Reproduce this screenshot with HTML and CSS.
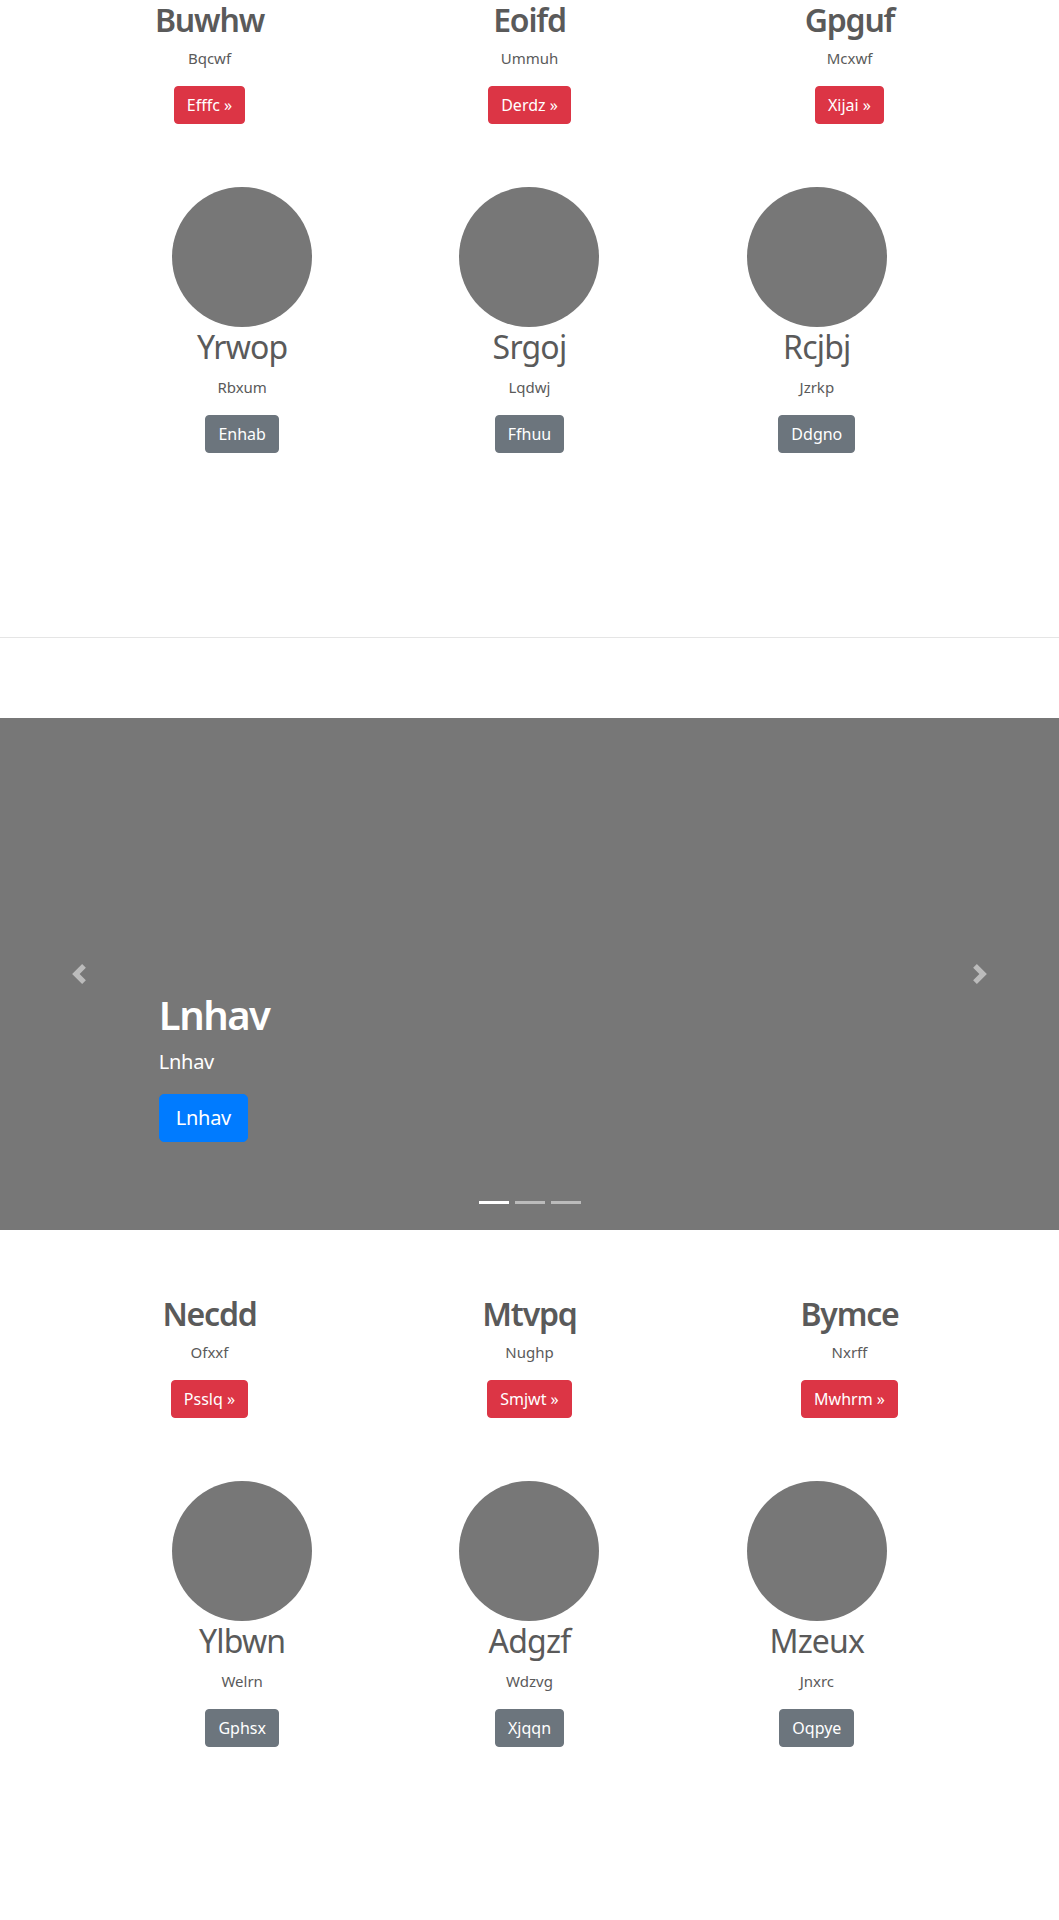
FILE: index.html
```html
<!DOCTYPE html>
<html lang="en">
<head>
<meta charset="utf-8">
<title>Features</title>
<link rel="stylesheet" href="styles.css">
</head>
<body>
<section class="features">
  <div class="row row-text">
    <div class="col">
      <h2 class="title">Buwhw</h2>
      <p class="sub">Bqcwf</p>
      <a class="btn btn-danger" href="#">Efffc »</a>
    </div>
    <div class="col">
      <h2 class="title">Eoifd</h2>
      <p class="sub">Ummuh</p>
      <a class="btn btn-danger" href="#">Derdz »</a>
    </div>
    <div class="col">
      <h2 class="title">Gpguf</h2>
      <p class="sub">Mcxwf</p>
      <a class="btn btn-danger" href="#">Xijai »</a>
    </div>
  </div>
  <div class="row row-avatars">
    <div class="col">
      <svg class="avatar" width="140" height="140" viewBox="0 0 140 140"><circle cx="70" cy="70" r="70" fill="#777"/></svg>
      <h2 class="name">Yrwop</h2>
      <p class="sub">Rbxum</p>
      <a class="btn btn-secondary" href="#">Enhab</a>
    </div>
    <div class="col">
      <svg class="avatar" width="140" height="140" viewBox="0 0 140 140"><circle cx="70" cy="70" r="70" fill="#777"/></svg>
      <h2 class="name">Srgoj</h2>
      <p class="sub">Lqdwj</p>
      <a class="btn btn-secondary" href="#">Ffhuu</a>
    </div>
    <div class="col">
      <svg class="avatar" width="140" height="140" viewBox="0 0 140 140"><circle cx="70" cy="70" r="70" fill="#777"/></svg>
      <h2 class="name">Rcjbj</h2>
      <p class="sub">Jzrkp</p>
      <a class="btn btn-secondary" href="#">Ddgno</a>
    </div>
  </div>
</section>

<hr class="divider">

<div class="carousel">
  <div class="caption">
    <h1 class="caption-title">Lnhav</h1>
    <p class="caption-text">Lnhav</p>
    <a class="btn btn-lg btn-primary" href="#">Lnhav</a>
  </div>
  <a class="control control-prev" href="#" aria-label="Previous">
    <svg width="20" height="20" viewBox="0 0 8 8"><path fill="#fff" d="M5.25 0l-4 4 4 4 1.5-1.5L4.25 4l2.5-2.5L5.25 0z"/></svg>
  </a>
  <a class="control control-next" href="#" aria-label="Next">
    <svg width="20" height="20" viewBox="0 0 8 8"><path fill="#fff" d="M2.75 0l-1.5 1.5L3.75 4l-2.5 2.5L2.75 8l4-4-4-4z"/></svg>
  </a>
  <ol class="indicators">
    <li class="active"></li>
    <li></li>
    <li></li>
  </ol>
</div>

<section class="features features-bottom">
  <div class="row row-text">
    <div class="col">
      <h2 class="title">Necdd</h2>
      <p class="sub">Ofxxf</p>
      <a class="btn btn-danger" href="#">Psslq »</a>
    </div>
    <div class="col">
      <h2 class="title">Mtvpq</h2>
      <p class="sub">Nughp</p>
      <a class="btn btn-danger" href="#">Smjwt »</a>
    </div>
    <div class="col">
      <h2 class="title">Bymce</h2>
      <p class="sub">Nxrff</p>
      <a class="btn btn-danger" href="#">Mwhrm »</a>
    </div>
  </div>
  <div class="row row-avatars">
    <div class="col">
      <svg class="avatar" width="140" height="140" viewBox="0 0 140 140"><circle cx="70" cy="70" r="70" fill="#777"/></svg>
      <h2 class="name">Ylbwn</h2>
      <p class="sub">Welrn</p>
      <a class="btn btn-secondary" href="#">Gphsx</a>
    </div>
    <div class="col">
      <svg class="avatar" width="140" height="140" viewBox="0 0 140 140"><circle cx="70" cy="70" r="70" fill="#777"/></svg>
      <h2 class="name">Adgzf</h2>
      <p class="sub">Wdzvg</p>
      <a class="btn btn-secondary" href="#">Xjqqn</a>
    </div>
    <div class="col">
      <svg class="avatar" width="140" height="140" viewBox="0 0 140 140"><circle cx="70" cy="70" r="70" fill="#777"/></svg>
      <h2 class="name">Mzeux</h2>
      <p class="sub">Jnxrc</p>
      <a class="btn btn-secondary" href="#">Oqpye</a>
    </div>
  </div>
</section>
</body>
</html>
```

FILE: styles.css
```css
* { box-sizing: border-box; }

body {
  margin: 0;
  padding-top: 1px;
  font-family: "Noto Sans", "Open Sans", sans-serif;
  color: #5a5a5a;
  background: #fff;
}

.row {
  display: grid;
  grid-template-columns: repeat(3, 1fr);
  margin-left: auto;
  margin-right: auto;
}

.row-text { width: 960px; }

.row-avatars {
  width: 862px;
  margin-top: 63px;
}

.col {
  display: flex;
  flex-direction: column;
  align-items: center;
  text-align: center;
}

.title {
  font-size: 32px;
  line-height: 38.4px;
  font-weight: 600;
  letter-spacing: -1.2px;
  margin: 0 0 9px;
}

.name {
  font-size: 32px;
  line-height: 38.4px;
  font-weight: 400;
  letter-spacing: -0.8px;
  margin: 1px 0 10px;
}

.sub {
  font-size: 15px;
  line-height: 21px;
  margin: 0 0 17px;
}

.avatar { display: block; }

.btn {
  display: inline-block;
  font-size: 16px;
  line-height: 24px;
  padding: 6px 12px;
  border: 1px solid transparent;
  border-radius: 4px;
  color: #fff;
  text-decoration: none;
}

.btn-danger { background: #dc3545; border-color: #dc3545; }
.btn-secondary { background: #6c757d; border-color: #6c757d; }
.btn-primary { background: #007bff; border-color: #007bff; }

.btn-lg {
  font-size: 20px;
  line-height: 30px;
  padding: 8px 16px;
  border-radius: 5px;
  letter-spacing: -0.3px;
}

.divider {
  height: 0;
  border: 0;
  border-top: 1px solid #e5e5e5;
  margin: 184px 0 80px;
}

.carousel {
  position: relative;
  height: 512px;
  background: #777;
  overflow: hidden;
}

.caption {
  position: absolute;
  left: 15%;
  right: 15%;
  top: 273px;
  color: #fff;
  display: flex;
  flex-direction: column;
  align-items: flex-start;
}

.caption-title {
  font-size: 40px;
  line-height: 48px;
  font-weight: 600;
  letter-spacing: -1.5px;
  margin: 0 0 8px;
}

.caption-text {
  font-size: 20px;
  line-height: 30px;
  letter-spacing: -0.3px;
  margin: 0 0 17px;
}

.control {
  position: absolute;
  top: 0;
  bottom: 0;
  width: 15%;
  display: flex;
  align-items: center;
  justify-content: center;
  opacity: 0.5;
}

.control-prev { left: 0; }
.control-next { right: 0; }

.indicators {
  position: absolute;
  left: 0;
  right: 0;
  bottom: 0;
  margin: 0 0 16px;
  padding: 0;
  list-style: none;
  display: flex;
  justify-content: center;
}

.indicators li {
  width: 30px;
  height: 23px;
  margin: 0 3px;
  border-top: 10px solid transparent;
  border-bottom: 10px solid transparent;
  background: #fff;
  background-clip: padding-box;
  opacity: 0.5;
}

.indicators li.active { opacity: 1; }

.features-bottom { margin-top: 65px; }
```
